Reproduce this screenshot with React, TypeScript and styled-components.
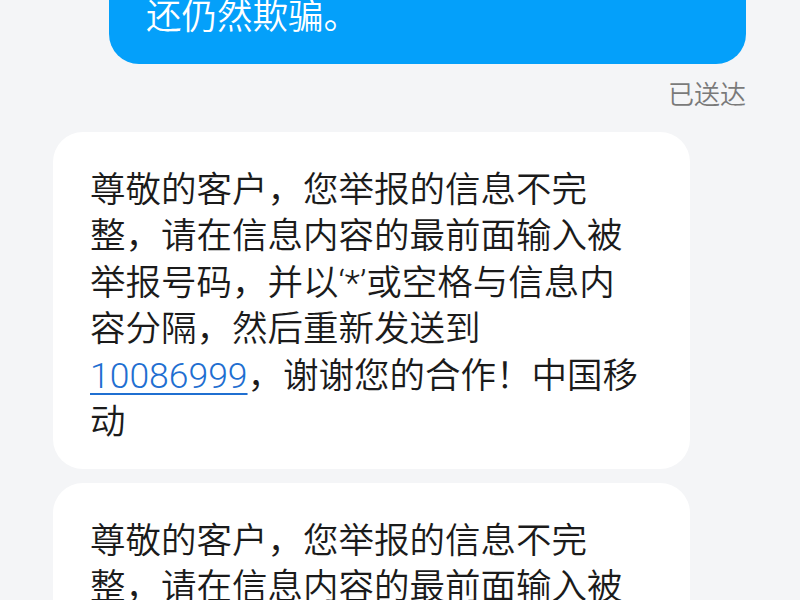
import styled, { createGlobalStyle } from 'styled-components'

const GlobalStyle = createGlobalStyle`
  html, body {
    margin: 0;
    padding: 0;
    background: #f4f5f7;
  }
  body {
    font-family: "Roboto", "Noto Sans CJK SC", sans-serif;
    -webkit-font-smoothing: antialiased;
  }
`

const Screen = styled.div`
  width: 800px;
  height: 600px;
  overflow: hidden;
  background: #f4f5f7;
`

// the list is scrolled: the top of the sent bubble lies above the screen
const Thread = styled.div`
  display: flex;
  flex-direction: column;
  padding: 0 54px 0 53px;
  margin-top: -36px;
`

const Bubble = styled.div<{ $mine?: boolean }>`
  box-sizing: border-box;
  width: 637px;
  align-self: ${p => (p.$mine ? 'flex-end' : 'flex-start')};
  background: ${p => (p.$mine ? '#04a0fa' : '#ffffff')};
  color: ${p => (p.$mine ? '#ffffff' : '#1b1b1b')};
  border-radius: 30px;
  padding: ${p => (p.$mine ? '30px 44px 23px 37px' : '35px 44px 23px 37px')};
  font-size: 35.5px;
  font-weight: 350;
  line-height: 46.5px;
  margin-bottom: 14px;
  word-break: normal;
  line-break: strict;
`

const Status = styled.div`
  align-self: flex-end;
  font-size: 26px;
  font-weight: 350;
  line-height: 30px;
  color: #7a7a7a;
  margin: 2px 0 22px;
`

const Phone = styled.a`
  color: #1f6fd1;
  text-decoration: underline;
  text-decoration-thickness: 2px;
  text-underline-offset: 5px;
`

const notice = (
  <>
    尊敬的客户，您举报的信息不完整，请在信息内容的最前面输入被举报号码，并以‘*’或空格与信息内容分隔，然后重新发送到
    <Phone>10086999</Phone>，谢谢您的合作！中国移动
  </>
)

export default function App() {
  return (
    <Screen>
      <GlobalStyle />
      <Thread>
        <Bubble $mine>还仍然欺骗。</Bubble>
        <Status>已送达</Status>
        <Bubble>{notice}</Bubble>
        <Bubble>{notice}</Bubble>
      </Thread>
    </Screen>
  )
}
